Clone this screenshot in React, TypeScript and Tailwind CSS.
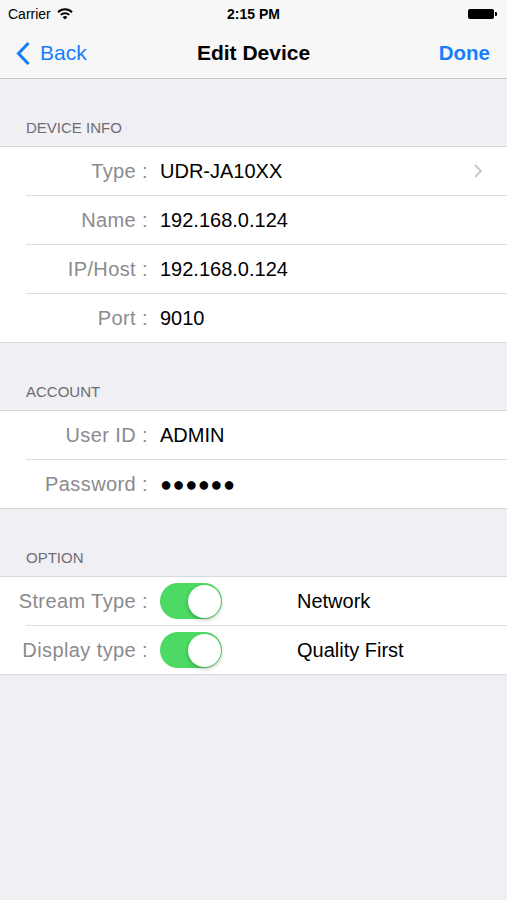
import React from "react";

const font = { fontFamily: '"Liberation Sans", Arial, sans-serif' };

function Header({ title }: { title: string }) {
    return (
        <div className="flex h-[67px] items-end px-[26px] pb-[9px] text-[15px] leading-[18px] text-[#6d6d72]">
            {title}
        </div>
    );
}

function Row({
    label,
    children,
    last,
    chevron,
}: {
    label: string;
    children: React.ReactNode;
    last?: boolean;
    chevron?: boolean;
}) {
    return (
        <div className="relative flex h-[48px] items-center bg-white">
            <div className="w-[148px] shrink-0 whitespace-nowrap text-right text-[20px] tracking-[0.4px] text-[#8a8a8f]">
                {label}
            </div>
            <div className="ml-[12px] flex flex-1 items-center text-[20px] text-black">{children}</div>
            {chevron && (
                <svg className="mr-[24px]" width="10" height="16" viewBox="0 0 10 16">
                    <polyline points="2,2 8,8 2,14" fill="none" stroke="#c7c7cc" strokeWidth="1.8" />
                </svg>
            )}
            {!last && <div className="absolute bottom-[-1px] left-[26px] right-0 h-px bg-[#dcdce0]" />}
        </div>
    );
}

function Section({ children }: { children: React.ReactNode }) {
    return (
        <div className="flex flex-col gap-px border-y border-[#d8d8dc] bg-white">{children}</div>
    );
}

function Toggle() {
    return (
        <div className="relative h-[36px] w-[62px] shrink-0 rounded-full bg-[#4cd964]">
            <div className="absolute right-[1.5px] top-[1.5px] h-[33px] w-[33px] rounded-full bg-white shadow-[0_2px_4px_rgba(0,0,0,0.25)]" />
        </div>
    );
}

export default function App() {
    return (
        <div className="min-h-[900px] w-[507px] bg-[#efeff4]" style={font}>
            <div className="border-b border-[#c4c4c8] bg-[#f7f7f7]">
                <div className="flex h-[28px] items-center justify-between px-[8px] text-[14px]">
                    <div className="flex w-[120px] items-center gap-[6px] text-black">
                        <span>Carrier</span>
                        <svg width="16" height="12" viewBox="0 0 16 12">
                            <path d="M1 4.2 A10 10 0 0 1 15 4.2" fill="none" stroke="#000" strokeWidth="2" />
                            <path d="M3.7 6.9 A6.2 6.2 0 0 1 12.3 6.9" fill="none" stroke="#000" strokeWidth="2" />
                            <path d="M8 11.5 L5.6 9.2 A3.4 3.4 0 0 1 10.4 9.2 Z" fill="#000" />
                        </svg>
                    </div>
                    <div className="font-bold text-black">2:15 PM</div>
                    <div className="flex w-[120px] justify-end pr-[2px]">
                        <div className="flex items-center">
                            <div className="h-[10px] w-[26px] rounded-[2px] bg-black" />
                            <div className="ml-px h-[4px] w-[2px] rounded-r-[1px] bg-black" />
                        </div>
                    </div>
                </div>
                <div className="relative flex h-[50px] items-center justify-between px-[16px]">
                    <div className="flex items-center gap-[9px] text-[21px] text-[#157efb]">
                        <svg width="15" height="25" viewBox="0 0 15 25">
                            <polyline points="12.5,2 2.5,12.5 12.5,23" fill="none" stroke="#157efb" strokeWidth="3" />
                        </svg>
                        <span>Back</span>
                    </div>
                    <div className="pointer-events-none absolute left-0 right-0 text-center text-[21px] font-bold text-black">
                        Edit Device
                    </div>
                    <div className="pr-[1px] text-[20.5px] font-bold text-[#157efb]">Done</div>
                </div>
            </div>

            <Header title="DEVICE INFO" />
            <Section>
                <Row label="Type :" chevron>
                    UDR-JA10XX
                </Row>
                <Row label="Name :">192.168.0.124</Row>
                <Row label="IP/Host :">192.168.0.124</Row>
                <Row label="Port :" last>
                    9010
                </Row>
            </Section>

            <Header title="ACCOUNT" />
            <Section>
                <Row label="User ID :">ADMIN</Row>
                <Row label="Password :" last>
                    <span className="tracking-[0.5px]">●●●●●●</span>
                </Row>
            </Section>

            <Header title="OPTION" />
            <Section>
                <Row label="Stream Type :">
                    <Toggle />
                    <span className="ml-[75px]">Network</span>
                </Row>
                <Row label="Display type :" last>
                    <Toggle />
                    <span className="ml-[75px]">Quality First</span>
                </Row>
            </Section>
        </div>
    );
}
